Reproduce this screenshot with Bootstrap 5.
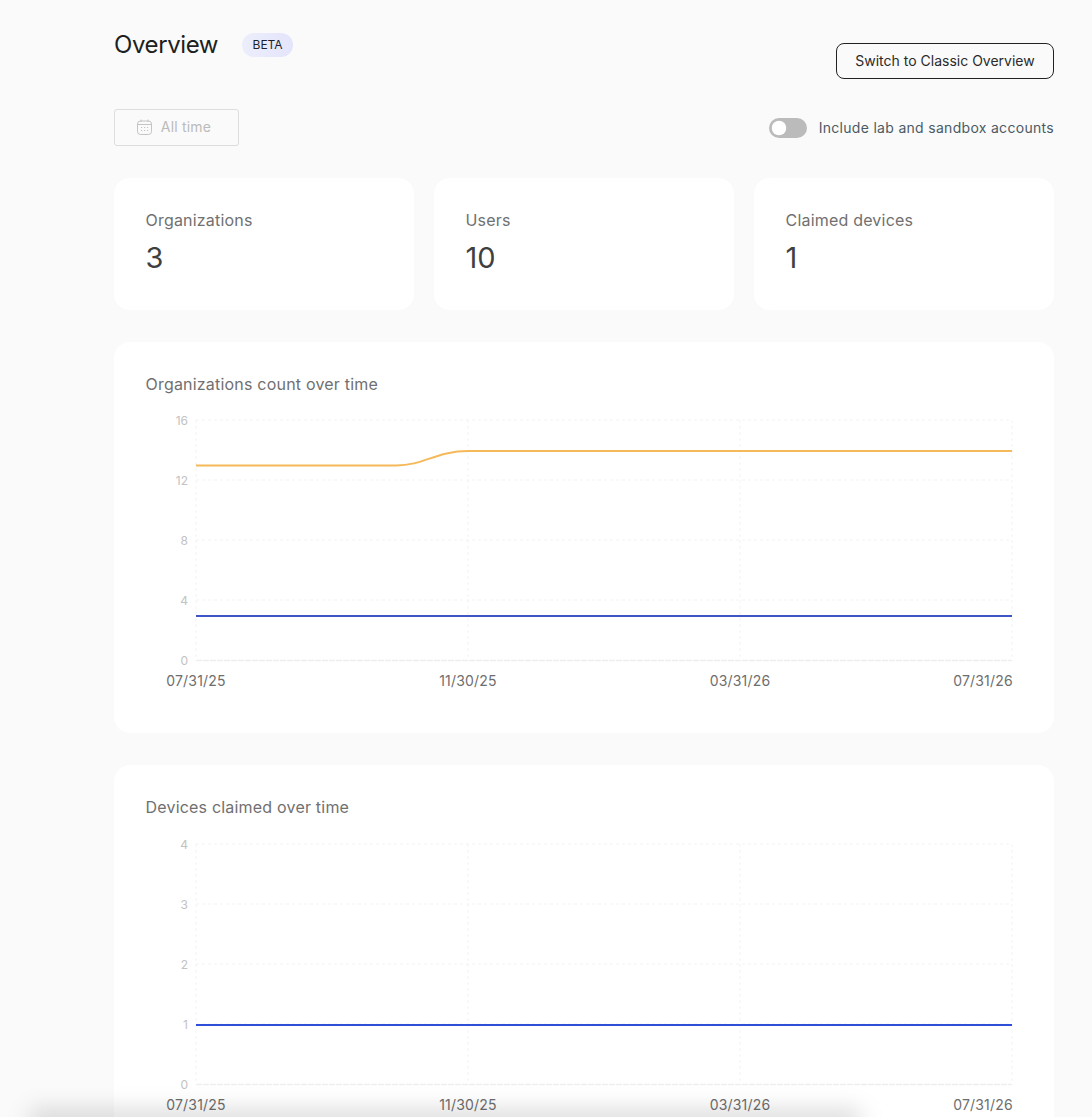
<!DOCTYPE html>
<html lang="en">
<head>
<meta charset="utf-8">
<title>Overview</title>
<link href="https://cdn.jsdelivr.net/npm/bootstrap@5.3.0/dist/css/bootstrap.min.css" rel="stylesheet">
<style>
html,body{height:1117px;overflow:hidden}
body{background:#fafafa;font-family:Inter,"Liberation Sans",sans-serif;color:#222;-webkit-font-smoothing:antialiased}
.page-wrap{padding:0 38px 0 114px;height:1117px;overflow:hidden}
.head-row{height:109px;align-items:flex-start}
.page-title{font-size:24px;font-weight:400;line-height:30px;margin:30px 0 0;color:#1d1f21;letter-spacing:-.4px}
.beta-pill{margin:33px 0 0 24px;width:51px;height:24px;border-radius:12px;background:linear-gradient(90deg,#eceefb,#e4e4fb);font-size:12px;line-height:24px;text-align:center;color:#1d1f2b}
.switch-btn{margin-top:43px;width:218px;height:36px;border:1px solid #222;border-radius:8px;font-size:14px;line-height:20px;padding:0;color:#2a2a2a;background:transparent}
.filter-row{height:37px;margin-bottom:32px}
.date-btn{width:125px;height:37px;padding:0 5px 2px 0;border:1px solid #ddd;border-radius:3px;font-size:14px;color:#bbb;background:transparent;gap:9px;opacity:1;letter-spacing:.2px}
.date-btn:disabled{color:#bbb;border-color:#ddd;background:transparent;opacity:1}
.lab-switch{margin:0;padding:0;min-height:0;gap:12px}
.lab-switch .form-check-input{width:38px;height:20px;margin:0;background-color:#bbb;border:0;float:none;opacity:1;--bs-form-switch-bg:url("data:image/svg+xml,%3csvg xmlns='http://www.w3.org/2000/svg' viewBox='-4 -4 8 8'%3e%3ccircle r='2.9' fill='%23fff'/%3e%3c/svg%3e")}
.lab-label{font-size:14px;line-height:20px;color:#4a5a65;letter-spacing:.3px;opacity:1!important;padding-top:1px}
.stat-grid{display:grid;grid-template-columns:repeat(3,300px);gap:20px;margin-bottom:32px}
.panel{background:#fff;border:0;border-radius:16px;padding:32px 32px 32px 31.5px}
.stat-panel{height:132px}
.stat-name{font-size:16px;line-height:20px;color:#707070;letter-spacing:.2px}
.stat-num{font-size:29px;line-height:36px;color:#3f3f3f;margin-top:10px;font-weight:400}
.chart-panel{height:391px;margin-bottom:32px}
.chart-title{font-size:16px;line-height:20px;color:#707070;letter-spacing:.2px}
.chart-svg{display:block;width:876px;height:300px;overflow:visible}
.chart-svg text{font-family:Inter,"Liberation Sans",sans-serif}
.y-t{font-size:12px;fill:#c2c2c2;text-anchor:end}
.x-t{font-size:14px;fill:#6e6e6e;text-anchor:middle;letter-spacing:.2px}
.bottom-blur{position:fixed;left:30px;width:830px;bottom:-14px;height:22px;background:rgba(0,0,0,.14);filter:blur(11px);pointer-events:none}
</style>
</head>
<body>
<div class="page-wrap">
  <div class="d-flex head-row">
    <h1 class="page-title">Overview</h1>
    <span class="beta-pill">BETA</span>
    <button type="button" class="btn switch-btn ms-auto">Switch to Classic Overview</button>
  </div>
  <div class="d-flex justify-content-between align-items-center filter-row">
    <button type="button" class="btn date-btn d-flex align-items-center justify-content-center" disabled>
      <svg width="15" height="16" viewBox="0 0 15 16" fill="none" stroke="#c4c4c4" stroke-width="1" aria-hidden="true"><rect x=".5" y="2" width="14" height="13.5" rx="3"/><path d="M.5 5.5h14M4 .5v2.5M11 .5v2.5"/><path d="M4 8.5h1.2M7 8.5h1.2M10 8.5h1.2M4 11.5h1.2M7 11.5h1.2M10 11.5h1.2" stroke-width="1.2"/></svg>
      <span>All time</span>
    </button>
    <div class="form-check form-switch d-flex align-items-center lab-switch">
      <input class="form-check-input" type="checkbox" role="switch" id="labSwitch">
      <label class="form-check-label lab-label" for="labSwitch">Include lab and sandbox accounts</label>
    </div>
  </div>
  <div class="stat-grid">
    <div class="panel stat-panel"><div class="stat-name">Organizations</div><div class="stat-num">3</div></div>
    <div class="panel stat-panel"><div class="stat-name">Users</div><div class="stat-num">10</div></div>
    <div class="panel stat-panel"><div class="stat-name">Claimed devices</div><div class="stat-num">1</div></div>
  </div>
  <div class="panel chart-panel">
    <div class="chart-title">Organizations count over time</div>
    <svg class="chart-svg" viewBox="146 394 876 300" aria-label="Organizations count over time">
      <g stroke="#f3f3f3" stroke-dasharray="3 3" fill="none">
        <path d="M196 420H1012M196 480H1012M196 540H1012M196 600H1012"/>
        <path d="M196 420V660M468 420V660M740 420V660M1012 420V660"/>
      </g>
      <path d="M196 660.5H1012" stroke="#eee" stroke-width="1.5" stroke-dasharray="6 1"/>
      <g><text class="y-t" x="188" y="425">16</text><text class="y-t" x="188" y="485">12</text><text class="y-t" x="188" y="545">8</text><text class="y-t" x="188" y="605">4</text><text class="y-t" x="188" y="665">0</text></g>
      <path d="M196 465.5H396C424 465.5 436 451 468 451H1012" fill="none" stroke="#f6b959" stroke-width="2"/>
      <path d="M196 616H1012" fill="none" stroke="#3e55c4" stroke-width="2"/>
      <text class="x-t" x="196" y="686">07/31/25</text><text class="x-t" x="468" y="686">11/30/25</text><text class="x-t" x="740" y="686">03/31/26</text><text class="x-t" x="983" y="686">07/31/26</text>
    </svg>
  </div>
  <div class="panel chart-panel">
    <div class="chart-title">Devices claimed over time</div>
    <svg class="chart-svg" viewBox="146 817 876 300" aria-label="Devices claimed over time">
      <g stroke="#f3f3f3" stroke-dasharray="3 3" fill="none">
        <path d="M196 844H1012M196 904H1012M196 964H1012M196 1024H1012"/>
        <path d="M196 844V1084M468 844V1084M740 844V1084M1012 844V1084"/>
      </g>
      <path d="M196 1084.5H1012" stroke="#eee" stroke-width="1.5" stroke-dasharray="6 1"/>
      <g><text class="y-t" x="188" y="849">4</text><text class="y-t" x="188" y="909">3</text><text class="y-t" x="188" y="969">2</text><text class="y-t" x="188" y="1029">1</text><text class="y-t" x="188" y="1089">0</text></g>
      <path d="M196 1025H1012" fill="none" stroke="#2f4fd8" stroke-width="2"/>
      <text class="x-t" x="196" y="1110">07/31/25</text><text class="x-t" x="468" y="1110">11/30/25</text><text class="x-t" x="740" y="1110">03/31/26</text><text class="x-t" x="983" y="1110">07/31/26</text>
    </svg>
  </div>
</div>
<div class="bottom-blur"></div>
<script src="https://cdn.jsdelivr.net/npm/bootstrap@5.3.0/dist/js/bootstrap.bundle.min.js"></script>
</body>
</html>
